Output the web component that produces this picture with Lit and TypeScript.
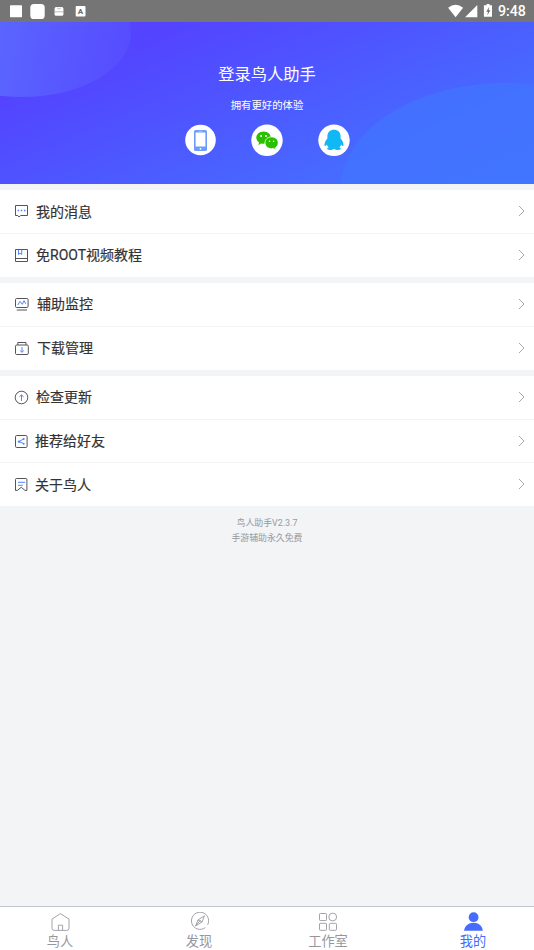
import { LitElement, html, svg, css, type SVGTemplateResult } from "lit";
import { customElement } from "lit/decorators.js";

const icons: Record<string, SVGTemplateResult> = {
  message: svg`<path d="M1.5 1.5h12v10H6.7L5 13l-1.2-1.5H1.5z"/><path class="b" stroke-width="1.5" d="M3.6 6.5h1.5M6.8 6.5h1.5M10 6.5h1.5"/>`,
  book: svg`<path d="M1.5 1.5h12v12h-12zM1.5 10.5h12"/><path class="b" d="M4.5 1.8v4.8l1.6-1.5 1.6 1.5V1.8"/>`,
  monitor: svg`<rect x="1.5" y="1.5" width="12.6" height="9" rx="1.2"/><path d="M2.8 13h10.2"/><path class="b" d="M3.8 8l2.2-3.6L8.3 7.3l1.7-3.6 1.8 3.1"/>`,
  download: svg`<rect x="1.5" y="4" width="12.8" height="9.5" rx="1.2"/><path d="M3.8 4V1.5h8.2V4"/><path class="b" d="M8 6v5.2M6.2 9.6L8 11.3l1.8-1.7"/>`,
  update: svg`<circle cx="7.5" cy="7.5" r="6.3"/><path class="b" d="M7.5 11V5M5.4 6.8L7.5 4.9l2.1 1.9"/>`,
  share: svg`<rect x="1.5" y="1.5" width="11.6" height="12" rx="1.2"/><path class="b" d="M9.7 4.9L5 7.6l4.7 2"/><g class="bf"><circle cx="9.7" cy="4.9" r="1"/><circle cx="5" cy="7.6" r="1.2"/><circle cx="9.7" cy="9.8" r="1"/></g>`,
  about: svg`<path d="M1.5 13.5V2.5q0-1 1-1h9.4q1 0 1 1v11l-2-.2-3.7-3-3.7 3z"/><path class="b" d="M4 5.3h7M4 8.3h4.8"/>`,
};

@customElement("menu-row")
class MenuRow extends LitElement {
  static properties = { icon: {}, label: {} };
  declare icon: string;
  declare label: string;
  static styles = css`
    :host { display: flex; align-items: center; flex: 1; box-sizing: border-box; padding: 0 9px 0 14px; background: #fff; }
    .icon { width: 16px; height: 15px; fill: none; stroke: #555559; stroke-width: 1; flex: none; }
    .b { stroke: #4f86ff; }
    .bf { fill: #4f86ff; stroke: none; }
    .label { flex: 1; padding-left: 6px; margin-top: -1px; font-size: 14px; line-height: 20px; color: #333; -webkit-text-stroke: 0.18px #333; }
    :host([low]) .label { margin-top: 1px; }
    :host([wide]) .label { padding-left: 7px; }
    :host([tight]) .label { padding-left: 5px; }
    .chevron { width: 7px; height: 12px; fill: none; stroke: #aaa; stroke-width: 1; margin-top: -1px; }
  `;
  render() {
    return html`<svg class="icon" viewBox="0 0 16 15">${icons[this.icon]}</svg>
      <span class="label">${this.label}</span>
      <svg class="chevron" viewBox="0 0 7 12"><path d="M1 1l5 5-5 5" /></svg>`;
  }
}

@customElement("app-root")
class AppRoot extends LitElement {
  static styles = css`
    :host { display: flex; flex-direction: column; width: 100%; height: 950px; overflow: hidden; background: #f3f4f6; font-family: Roboto, "Noto Sans CJK SC", sans-serif; }
    .status { height: 22px; flex: none; display: flex; align-items: center; justify-content: space-between; background: #757575; color: #fff; }
    .status svg { display: block; height: 22px; }
    .right { display: flex; align-items: center; }
    .time { font-size: 14.2px; line-height: 22px; font-weight: 500; width: 36px; white-space: nowrap; }
    .hero { height: 162px; flex: none; display: grid; }
    .hero > * { grid-area: 1 / 1; }
    .bg { width: 100%; height: 162px; display: block; }
    .login { display: flex; flex-direction: column; align-items: center; color: #fff; z-index: 1; }
    .title { margin-top: 41px; font-size: 16.3px; line-height: 24px; }
    .sub { margin-top: 11px; font-size: 10.4px; line-height: 16px; }
    .ways { margin-top: 10px; display: flex; gap: 35px; }
    .ways svg { width: 32px; height: 32px; display: block; }
    .group { margin-top: 6px; display: flex; flex-direction: column; height: 87px; flex: none; }
    .group.three { height: 130px; }
    menu-row:not(:last-child) { border-bottom: 1px solid #f3f4f6; }
    .version { margin-top: 10px; text-align: center; font-size: 8.9px; line-height: 15px; color: #96989d; }
    .tabs { margin-top: auto; height: 44px; flex: none; box-sizing: border-box; border-top: 1px solid #c4c5d0; background: #fff; display: flex; padding-left: 40px; color: #96979e; }
    .tab { width: 40px; display: flex; flex-direction: column; align-items: center; font-size: 13.2px; line-height: 18px; white-space: nowrap; }
    .tab + .tab { margin-left: 99px; }
    .tab + .tab + .tab { margin-left: 89px; }
    .tab + .tab + .tab + .tab { margin-left: 105px; }
    .tab svg { width: 20px; height: 20px; margin-top: 5px; fill: none; stroke: #a3a4aa; stroke-width: 1; flex: none; }
    .tab .name { margin-top: 1px; }
    .tab.on { color: #466cff; }
    .tab.on svg { fill: #466cff; stroke: none; }
    .mark { font: 700 8px Roboto, sans-serif; fill: #666; }
  `;
  render() {
    return html`
      <div class="status">
        <svg width="96" viewBox="0 0 96 22" fill="#fff">
          <rect x="10" y="5.3" width="12" height="12" rx=".7" />
          <rect x="30.3" y="4" width="14.4" height="15" rx="3.6" />
          <rect x="54.6" y="7" width="8.8" height="8.8" rx="1.5" />
          <path d="M57 7.8q2 2.8 4 0M55 11.8h8" fill="none" stroke="#999" stroke-width=".7" />
          <rect x="75.7" y="6" width="9.8" height="10.6" rx="1" />
          <text class="mark" x="77.8" y="14">A</text>
        </svg>
        <div class="right">
          <svg width="50" viewBox="0 0 50 22" fill="#fff">
            <path d="M.1 7.7Q7.6 1.9 15.1 7.7L7.6 17.3z" />
            <path d="M29.3 5v12.2H17.1z" />
            <path d="M38.6 4h3v1.3h2.4v11.4h-8.1V5.3h2.7z" />
            <path d="M41.3 6.8l-3 5h1.8l-.9 3.5 3.2-5h-1.9z" fill="#666" />
          </svg>
          <span class="time">9:48</span>
        </div>
      </div>
      <div class="hero">
        <svg class="bg" viewBox="0 22 534 162" preserveAspectRatio="none">
          <defs>
            <linearGradient id="sky" gradientUnits="userSpaceOnUse" x1="76" y1="62" x2="216" y2="384">
              <stop offset="0" stop-color="#5443ff" /><stop offset=".58" stop-color="#476aff" /><stop offset="1" stop-color="#4176ff" />
            </linearGradient>
            <linearGradient id="glow" gradientUnits="userSpaceOnUse" x1="0" y1="40" x2="131" y2="60"><stop offset="0" stop-color="#5a64ff" /><stop offset="1" stop-color="#564cff" /></linearGradient>
          </defs>
          <rect y="22" width="534" height="162" fill="url(#sky)" />
          <ellipse cx="22" cy="33" rx="109" ry="64" fill="url(#glow)" />
          <ellipse cx="505" cy="190" rx="165" ry="107" fill="#4177ff" opacity=".65" />
        </svg>
        <div class="login">
          <div class="title">登录鸟人助手</div>
          <div class="sub">拥有更好的体验</div>
          <div class="ways">
            <svg viewBox="0 0 32 32"><circle cx="16.5" cy="16" r="15.3" fill="#fff" /><g transform="translate(1 0)"><rect x="9" y="6" width="13" height="21" rx="1.6" fill="#6f9bff" /><path d="M10.6 8.5h9.8v14h-9.8z" fill="#fff" /><path d="M13.8 7.2h3.4" stroke="#c5d8ff" stroke-width=".7" /><circle cx="15.5" cy="24.8" r=".9" fill="#fff" /></g></svg>
            <svg viewBox="0 0 32 32"><circle cx="16" cy="16.3" r="15.7" fill="#fff" />
              <path d="M12.6 7.4c-4.1 0-7.3 2.8-7.3 6.2 0 2.1 1.1 3.7 2.8 4.9l-.8 2.4 2.8-1.5c3 .9 9.8.1 9.8-5.8 0-3.4-3.2-6.2-7.3-6.2z" fill="#2abf00" />
              <path d="M20.6 12.9c-3.9 0-6.6 2.6-6.6 5.9s2.7 5.9 6.6 5.9l2-.3 2.6 1.5-.7-2.2c1.6-1.1 2.7-2.8 2.7-4.9 0-3.3-2.7-5.9-6.6-5.9z" fill="#2abf00" stroke="#fff" stroke-width=".8" />
              <g fill="#fff"><circle cx="10.1" cy="11.9" r="1" /><circle cx="15" cy="11.9" r="1" /><circle cx="18.5" cy="17.2" r=".8" /><circle cx="22.6" cy="17.2" r=".8" /></g></svg>
            <svg viewBox="0 0 32 32"><circle cx="16" cy="16.3" r="15.7" fill="#fff" />
              <path d="M16 5.8c-4 0-6.6 2.7-6.6 6.6v2.2c-1.7 2.1-3.1 4.5-2.9 6.6.1 1.4 1.3.7 2.3-.8.3 1 .9 2 1.9 2.9-1.5.5-2 1.7-1 2.3 1.3.7 5.1.5 6.3-.8 1.2 1.3 5 1.5 6.3.8 1-.6.5-1.8-1-2.3 1-.9 1.6-1.9 1.9-2.9 1 1.5 2.2 2.2 2.3.8.2-2.1-1.2-4.5-2.9-6.6v-2.2c0-3.9-2.6-6.6-6.6-6.6z" fill="#12b7f5" /></svg>
          </div>
        </div>
      </div>
      <div class="group">
        <menu-row low icon="message" label="我的消息"></menu-row>
        <menu-row icon="book" label="免ROOT视频教程"></menu-row>
      </div>
      <div class="group">
        <menu-row wide icon="monitor" label="辅助监控"></menu-row>
        <menu-row wide icon="download" label="下载管理"></menu-row>
      </div>
      <div class="group three">
        <menu-row icon="update" label="检查更新"></menu-row>
        <menu-row tight icon="share" label="推荐给好友"></menu-row>
        <menu-row tight low icon="about" label="关于鸟人"></menu-row>
      </div>
      <div class="version"><div>鸟人助手V2.3.7</div><div>手游辅助永久免费</div></div>
      <div class="tabs">
        <div class="tab"><svg viewBox="0 0 20 20"><path d="M4.2 18.4q-2.2 0-2.2-2V7.1L10.4 1.6 19 7.1v9.3q0 2-2.2 2zM8.4 18.4v-5.2h4.2v5.2" /></svg><span class="name">鸟人</span></div>
        <div class="tab"><svg viewBox="0 0 20 20"><g transform="translate(.6 -1)"><path d="M15.7 16.6A8.6 8.6 0 1 1 18 13.9M14.8 4.8L12.5 11 6 15l2.3-6zM8.3 9l4.2 2M6 15l5-6" /></g></svg><span class="name">发现</span></div>
        <div class="tab"><svg viewBox="0 0 20 20"><rect x="1.5" y="1.5" width="7" height="7" rx=".7" /><circle cx="14.7" cy="5" r="3.9" /><rect x="1.5" y="11.3" width="7" height="7" rx=".7" /><rect x="11.3" y="11.3" width="7.2" height="7" rx="1" /></svg><span class="name">工作室</span></div>
        <div class="tab on"><svg viewBox="0 0 20 20"><circle cx="10.6" cy="5.2" r="4.9" /><path d="M1 18.7c.7-5 4.5-8 9.6-8s8.7 3 9.2 8z" /></svg><span class="name">我的</span></div>
      </div>
    `;
  }
}
